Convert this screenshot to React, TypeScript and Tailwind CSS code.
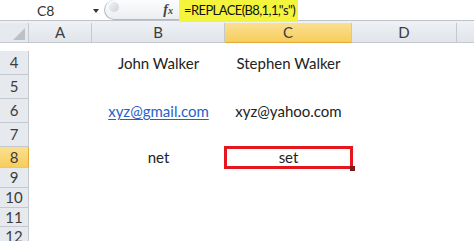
import React from "react";

const rows = [
  { n: "4", h: "h-[32px] pt-[8px]", b: "John Walker", c: "Stephen Walker" },
  { n: "5", h: "h-[24px]" },
  { n: "6", h: "h-[24px]", b: "xyz@gmail.com", link: true, c: "xyz@yahoo.com" },
  { n: "7", h: "h-[24px]" },
  { n: "8", h: "h-[21px]", b: "net", c: "set", active: true },
  { n: "9", h: "h-[20px]" },
  { n: "10", h: "h-[20px]" },
  { n: "11", h: "h-[19px]" },
  { n: "12", h: "h-[19px]" },
];

const cols = [
  { l: "A", w: "w-[63px]" },
  { l: "B", w: "w-[133px]" },
  { l: "C", w: "w-[127px]", active: true },
  { l: "D", w: "w-[105px]" },
];

export default function App() {
  return (
    <div className="w-[474px] h-[241px] overflow-hidden bg-white font-['Lato',sans-serif] text-[#222]">
      {/* formula bar */}
      <div className="flex h-[20px] items-start">
        <div className="relative flex h-[20px] w-[104px] items-center pl-[37px] text-[14px] text-[#333]">
          C8
          <span className="absolute left-[93px] top-[9px] h-0 w-0 border-x-[3px] border-t-[4px] border-x-transparent border-t-[#333]" />
        </div>
        <div className="relative flex h-[20px] w-[75px] items-center justify-end rounded-l-full border border-r-0 border-t-0 border-[#b4bac2] bg-gradient-to-b from-[#fbfcfd] to-[#eceef1] pr-[6px]">
          <span className="absolute left-[4px] top-[2px] h-[10px] w-[10px] rounded-full bg-gradient-to-br from-[#f3f4f6] to-[#cdd1d6]" />
          <span className="font-['Liberation_Serif',serif] text-[14px] italic font-bold text-[#444] leading-none">
            f<span className="text-[10px]">x</span>
          </span>
        </div>
        <div className="relative z-10 -mb-[2px] flex h-[22px] w-[119px] items-center whitespace-nowrap bg-[#f5f43c] pl-[5px] text-[13px] tracking-[-0.6px] text-[#111]">
          =REPLACE(B8,1,1,"s")
        </div>
        <div className="h-[20px] flex-1" />
      </div>
      <div className="h-[3px] border-t border-[#bfc4cb] bg-[#eef0f3]" />

      {/* column headers */}
      <div className="flex h-[20px]">
        <div className="flex w-[29px] items-end justify-end border-b border-r border-[#c4c8cf] bg-[#e6e9ee] pb-[2px] pr-[3px]">
          <svg width="12" height="12" viewBox="0 0 12 12">
            <polygon points="12,0 12,12 0,12" fill="#bcc1c8" />
          </svg>
        </div>
        {cols.map((c) => (
          <div
            key={c.l}
            className={`${c.w} flex items-center justify-center border-b border-r border-[#c4c8cf] text-[15px] text-[#3c3c3c] ${
              c.active ? "bg-gradient-to-b from-[#fbe08f] to-[#f7cd5c] border-b-[#e2a93a]" : "bg-gradient-to-b from-[#edf0f4] to-[#e1e5ea]"
            }`}
          >
            {c.l}
          </div>
        ))}
        <div className="flex-1 border-b border-[#c4c8cf] bg-gradient-to-b from-[#edf0f4] to-[#e1e5ea]" />
      </div>

      {/* rows */}
      {rows.map((r) => (
        <div key={r.n} className={`flex ${r.h}`}>
          <div
            className={`flex w-[29px] items-center justify-center border-b border-r border-[#c4c8cf] text-[15px] text-[#3c3c3c] ${
              r.active ? "bg-gradient-to-b from-[#fbe08f] to-[#f7cd5c] border-r-[#e2a93a]" : "bg-[#e6e9ee]"
            }`}
          >
            {r.n}
          </div>
          <div className="w-[63px]" />
          <div className="flex w-[133px] items-center justify-center text-[15px]">
            {r.link ? <span className="text-[#1f63c7] underline underline-offset-2">{r.b}</span> : r.b}
          </div>
          <div className="relative flex w-[127px] items-center justify-center text-[15px]">
            {r.c}
            {r.active && (
              <>
                <span className="absolute -left-[1px] -top-[1px] -right-[1px] -bottom-[1px] border-[3px] border-[#e5161e]" />
                <span className="absolute -bottom-[3px] -right-[3px] h-[5px] w-[5px] bg-[#7a1c1c]" />
              </>
            )}
          </div>
          <div className="w-[105px]" />
          <div className="flex-1" />
        </div>
      ))}
    </div>
  );
}
